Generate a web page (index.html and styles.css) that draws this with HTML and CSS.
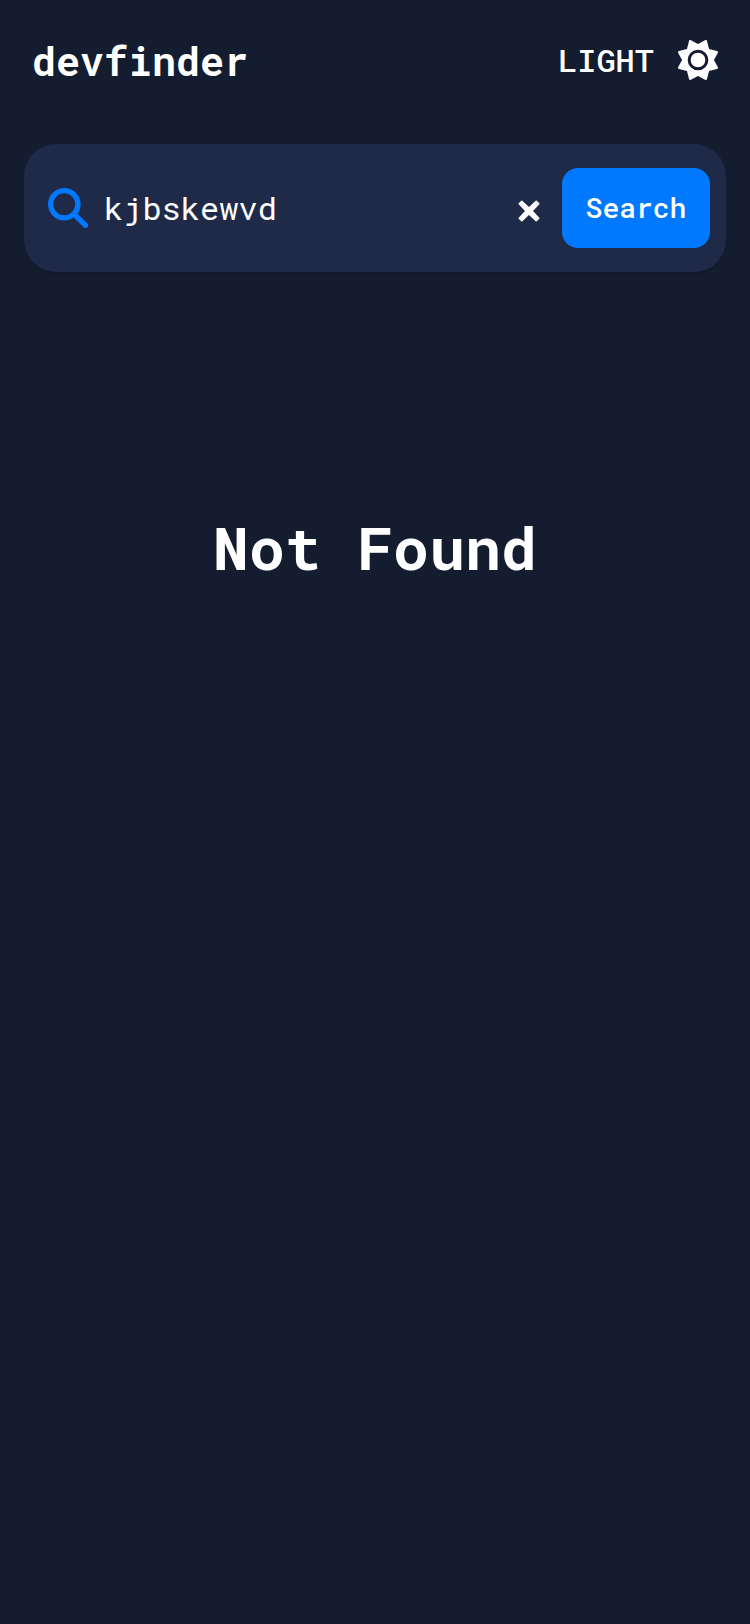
FILE: index.html
```html
<!DOCTYPE html>
<html lang="en">
<head>
  <meta charset="UTF-8" />
  <meta name="viewport" content="width=device-width, initial-scale=1" />
  <title>devfinder</title>
  <link rel="stylesheet" href="styles.css">
</head>
<body>
  <header class="header">
    <h1 class="logo">devfinder</h1>
    <button type="button" class="theme-toggle">
      <span>LIGHT</span>
      <svg class="icon" viewBox="0 0 512 512" aria-hidden="true">
        <path d="M361.5 1.2c5 2.1 8.6 6.6 9.6 11.9L397 115l101.9 25.8c5.3 1 9.8 4.6 11.9 9.6s1.5 10.7-1.6 15.2L460 256l49.2 90.3c3.1 4.5 3.7 10.2 1.6 15.2s-6.6 8.6-11.9 9.6L397 397 371.1 498.9c-1 5.3-4.6 9.8-9.6 11.9s-10.7 1.5-15.2-1.6L256 460l-90.3 49.2c-4.5 3.1-10.2 3.7-15.2 1.6s-8.6-6.6-9.6-11.9L115 397 13.1 371.1c-5.3-1-9.8-4.6-11.9-9.6s-1.5-10.7 1.6-15.2L52 256 2.8 165.7c-3.1-4.5-3.7-10.2-1.6-15.2s6.6-8.6 11.9-9.6L115 115 140.9 13.1c1-5.3 4.6-9.8 9.6-11.9s10.7-1.5 15.2 1.6L256 52 346.3 2.8c4.5-3.1 10.2-3.7 15.2-1.6zM162 256a94 94 0 1 1 188 0 94 94 0 1 1 -188 0zm226 0a132 132 0 1 0 -264 0 132 132 0 1 0 264 0z"/>
      </svg>
    </button>
  </header>

  <main>
    <form class="search-bar">
      <label class="search-label" for="username" aria-label="GitHub username">
        <svg class="icon" viewBox="0 0 512 512" aria-hidden="true">
          <path d="M418 208c0 45.9-14.9 88.3-40 120.7L504 455c13.5 13.5 13.5 35 0 48.5s-35 13.5-48.5 0L328.7 378c-34.4 25.2-74.8 38-120.7 38C93.1 416 0 322.9 0 208S93.1 0 208 0S418 93.1 418 208zM208 348a140 140 0 1 0 0-280 140 140 0 1 0 0 280z"/>
        </svg>
      </label>
      <input class="search-input" type="text" id="username" value="kjbskewvd" spellcheck="false" autocomplete="off">
      <button type="reset" class="clear-button" aria-label="Clear">
        <svg class="clear-icon" viewBox="0 0 22 22" aria-hidden="true">
          <path d="M3.8 1.2L11 8l7.2-6.8 2.600 2.600L14 11l6.800 7.200-2.600 2.600L11 14l-7.200 6.800-2.600-2.600L8 11 1.200 3.800z"/>
        </svg>
      </button>
      <button type="submit" class="search-button">Search</button>
    </form>

    <h2 class="not-found">Not Found</h2>
  </main>
</body>
</html>
```

FILE: styles.css
```css
* {
  box-sizing: border-box;
}
body {
  margin: 0;
  padding: 24px;
  min-height: 100vh;
  background: #141c2f;
  color: #fff;
  font-family: 'Roboto Mono', 'DejaVu Sans Mono', monospace;
}
button, input {
  font-family: inherit;
  color: inherit;
  border: none;
  background: none;
  padding: 0;
}
button {
  cursor: pointer;
}
.header {
  display: flex;
  align-items: center;
  justify-content: space-between;
  height: 72px;
  padding: 0 8px;
  margin-bottom: 48px;
}
.logo {
  margin: 0;
  padding-top: 2px;
  font-size: 40px;
  line-height: 48px;
}
.theme-toggle {
  display: flex;
  align-items: center;
  gap: 24px;
  font-size: 32px;
  font-weight: 500;
  line-height: 40px;
}
.icon {
  display: block;
  width: 40px;
  height: 40px;
  fill: currentColor;
}
.search-bar {
  display: flex;
  align-items: center;
  padding: 24px 16px 24px 24px;
  background: #1f2a48;
  border-radius: 32px;
  box-shadow: 0 2px 2px rgba(0, 0, 0, 0.1);
}
.search-label {
  color: #0079fe;
  margin-right: 16px;
}
.search-input {
  flex: 1;
  min-width: 0;
  font-size: 32px;
  line-height: 40px;
  outline: none;
}
.clear-button {
  padding-top: 6px;
  margin: 0 22px;
}
.clear-icon {
  display: block;
  width: 22px;
  height: 22px;
  fill: #fff;
  stroke: #fff;
  stroke-width: 1.5;
  stroke-linejoin: round;
}
.search-button {
  width: 148px;
  height: 80px;
  padding-bottom: 2px;
  background: #0079fe;
  border-radius: 16px;
  font-size: 28px;
  font-weight: 500;
}
.not-found {
  margin: 235px 0 0;
  font-size: 60px;
  line-height: 80px;
  text-align: center;
}
```
